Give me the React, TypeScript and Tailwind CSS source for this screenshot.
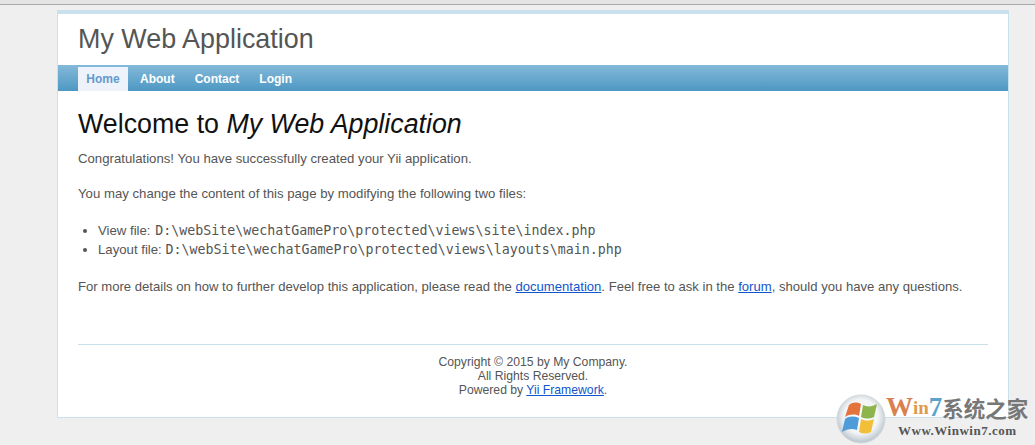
const sans = { fontFamily: '"Liberation Sans", Arial, sans-serif' }
const mono = { fontFamily: '"DejaVu Sans Mono", monospace' }

function WinLogo() {
  return (
    <svg width="50" height="50" viewBox="0 0 50 50" className="shrink-0">
      <defs>
        <radialGradient id="orb" cx="50%" cy="45%" r="55%">
          <stop offset="0%" stopColor="#ffffff" />
          <stop offset="65%" stopColor="#f2f4f5" />
          <stop offset="100%" stopColor="#b7c3cb" />
        </radialGradient>
      </defs>
      <circle cx="25" cy="25" r="24" fill="url(#orb)" stroke="#d3d9dd" />
      <path d="M13 11 C17 8 21 8 25 10 L23 22 C19 20 14 20 9 23 Z" fill="#e2743c" />
      <path d="M27 11 C31 13 36 13 41 10 L38 23 C33 25 29 25 25 23 Z" fill="#8db54c" />
      <path d="M9 25 C13 22 18 22 23 24 L21 36 C16 34 11 35 6 38 Z" fill="#4f9cdb" />
      <path d="M25 25 C29 27 33 27 38 25 L35 38 C31 40 27 40 23 38 Z" fill="#f2c038" />
    </svg>
  )
}

export default function App() {
  return (
    <div className="relative h-[445px] w-[1035px] overflow-hidden bg-[#efefef] text-[13.1px] text-[#555]" style={sans}>
      {/* barre du navigateur */}
      <div className="h-[5px] border-b border-[#a8a8a8] bg-[#e4e4e4]" />

      <div className="ml-[57px] mt-[5px] h-[408px] w-[952px] border-x border-b border-t-4 border-[#c9e0ed] bg-white">
        <div className="h-[51px] pl-5 pt-[7px] text-[26.9px] leading-[36px] text-[#555]">My Web Application</div>

        <nav className="flex h-[26px] items-end bg-gradient-to-b from-[#84b9d9] to-[#4c98c3] pl-5 text-[12px] font-bold text-white">
          <a className="flex h-6 w-[50px] items-center justify-center bg-[#eef3fb] text-[#6399cd]">Home</a>
          <a className="flex h-6 items-center pl-3 pr-2">About</a>
          <a className="flex h-6 items-center px-3">Contact</a>
          <a className="flex h-6 items-center px-2">Login</a>
        </nav>

        <main className="px-5">
          <h1 className="mt-[17px] text-[26.8px] leading-[32px] text-[#111]">
            Welcome to <i>My Web Application</i>
          </h1>
          <p className="mt-[10px] text-[13.2px] leading-[18px]">Congratulations! You have successfully created your Yii application.</p>
          <p className="mt-[17px] text-[13.2px] leading-[18px]">You may change the content of this page by modifying the following two files:</p>
          <ul className="mt-[18px] list-disc pl-5 text-[13.2px] leading-[19px]">
            <li>
              View file: <code className="ml-[1px] text-[13.3px]" style={mono}>D:\webSite\wechatGamePro\protected\views\site\index.php</code>
            </li>
            <li>
              Layout file: <code className="text-[13.3px]" style={mono}>D:\webSite\wechatGamePro\protected\views\layouts\main.php</code>
            </li>
          </ul>
          <p className="mt-[19px] leading-[18px]">
            For more details on how to further develop this application, please read the{' '}
            <a className="text-[#15c] underline">documentation</a>. Feel free to ask in the{' '}
            <a className="text-[#15c] underline">forum</a>, should you have any questions.
          </p>
        </main>

        <footer className="mx-5 mt-[48px] border-t border-[#c9e0ed] pt-[10px] text-center text-[12.2px] leading-[14px]">
          <div>Copyright © 2015 by My Company.</div>
          <div>All Rights Reserved.</div>
          <div>
            Powered by <a className="text-[#15c] underline">Yii Framework</a>.
          </div>
        </footer>
      </div>

      {/* filigrane */}
      <div className="absolute left-[836px] top-[394px] flex items-start">
        <WinLogo />
        <div className="flex flex-col" style={{ fontFamily: '"Liberation Serif", "Noto Sans CJK SC", serif' }}>
          <div className="flex h-[27px] items-center font-bold leading-none">
            <span className="text-[27px] text-[#d9804f]">W</span>
            <span className="text-[19px] text-[#dd9a4a]">in</span>
            <span className="text-[27px] text-[#5aa3cf]">7</span>
            <span className="text-[21.5px] text-[#777]" style={{ fontFamily: '"Noto Sans CJK SC", sans-serif' }}>系统之家</span>
          </div>
          <div className="mt-[3px] pl-[12px] text-[13px] font-bold leading-none tracking-[0.5px] text-[#555]">Www.Winwin7.com</div>
        </div>
      </div>
    </div>
  )
}
